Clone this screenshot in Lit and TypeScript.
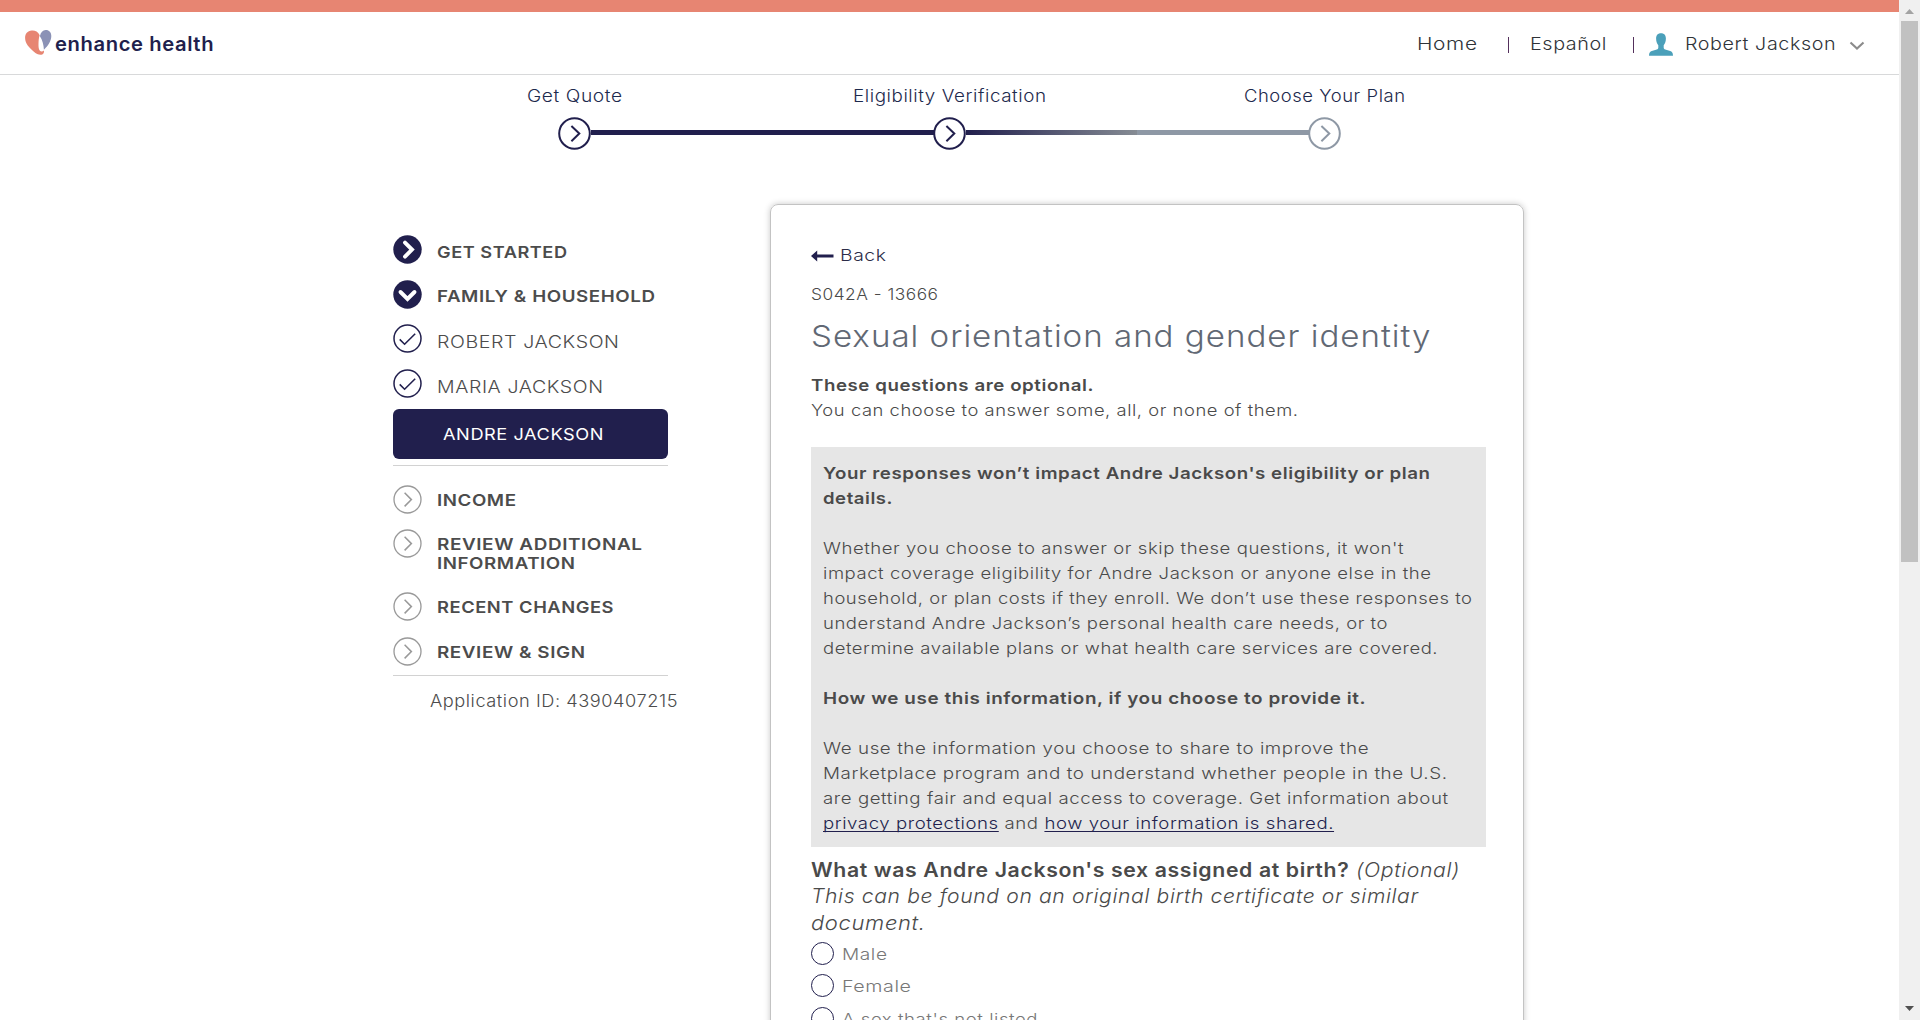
import { LitElement, html, svg, css } from "lit";
import { customElement, property } from "lit/decorators.js";

const TRACKING = 0.03;

/** One line of text in a widened cut: light tracking, then stretched to exactly `w` pixels. */
@customElement("fit-line")
export class FitLine extends LitElement {
  @property({ type: Number }) w = 0;

  static styles = css`
    :host {
      display: block;
      white-space: nowrap;
    }
    .ink {
      display: inline-block;
      transform-origin: 0 50%;
      letter-spacing: 0.03em;
    }
  `;

  updated() {
    const ink = this.renderRoot.querySelector<HTMLElement>(".ink")!;
    this.style.width = `${this.w}px`;
    ink.style.transform = "none";
    const trailing = TRACKING * parseFloat(getComputedStyle(ink).fontSize);
    const natural = ink.getBoundingClientRect().width - trailing;
    ink.style.transform = `scaleX(${(this.w / natural).toFixed(4)})`;
  }

  render() {
    return html`<span class="ink"><slot></slot></span>`;
  }
}

const line = (text: unknown, w: number) => html`<fit-line .w=${w}>${text}</fit-line>`;

const icons = {
  next: svg`<circle cx="14.5" cy="14.5" r="13.5" fill="none" stroke="currentColor" stroke-width="1.3"/><path d="M11.6 7.8 18.4 14.6 11.6 21.4" fill="none" stroke="currentColor" stroke-width="1.5"/>`,
  right: svg`<circle cx="14.5" cy="14.5" r="14.2" fill="currentColor"/><path d="M12 7.6 19 14.6 12 21.6" fill="none" stroke="#fff" stroke-width="3.9" stroke-linecap="round"/>`,
  down: svg`<circle cx="14.5" cy="14.5" r="14.2" fill="currentColor"/><path d="M7.5 12 14.5 19 21.5 12" fill="none" stroke="#fff" stroke-width="3.9" stroke-linecap="round"/>`,
  check: svg`<circle cx="14.5" cy="14.5" r="13.5" fill="none" stroke="currentColor" stroke-width="1.5"/><path d="M6.7 15.4 11.6 20.2 22.2 9.8" fill="none" stroke="currentColor" stroke-width="1.6"/>`,
};

type Item = { icon: keyof typeof icons; lines: [string, number][]; kind: string };

const upper: Item[] = [
  { icon: "right", lines: [["GET STARTED", 130]], kind: "started" },
  { icon: "down", lines: [["FAMILY & HOUSEHOLD", 218]], kind: "family" },
  { icon: "check", lines: [["ROBERT JACKSON", 182]], kind: "member" },
  { icon: "check", lines: [["MARIA JACKSON", 166]], kind: "member last" },
];

const lower: Item[] = [
  { icon: "next", lines: [["INCOME", 79]], kind: "todo" },
  { icon: "next", lines: [["REVIEW ADDITIONAL", 205], ["INFORMATION", 138]], kind: "todo tall" },
  { icon: "next", lines: [["RECENT CHANGES", 176.5]], kind: "todo" },
  { icon: "next", lines: [["REVIEW & SIGN", 148]], kind: "todo" },
];

@customElement("site-header")
export class SiteHeader extends LitElement {
  static styles = css`
    :host {
      display: flex;
      justify-content: space-between;
      box-sizing: border-box;
      height: 75px;
      border-top: 12px solid #e78572;
      border-bottom: 1px solid #d8d9da;
      padding: 0 34px 0 25px;
    }
    .brand {
      display: flex;
      padding-top: 18px;
      color: #211f4d;
    }
    .heart {
      width: 27px;
      height: 26px;
      margin-right: 3px;
    }
    .name {
      font-size: 19.5px;
      font-weight: 600;
      line-height: 27px;
      padding-top: 0.5px;
    }
    .nav {
      display: flex;
      padding-top: 19px;
      font-size: 17.6px;
      line-height: 25px;
      font-weight: 300;
      color: #2f3338;
    }
    .bar {
      width: 1px;
      height: 16px;
      margin-top: 6px;
      background: #54305c;
    }
    .home { margin-right: 31px; }
    .lang { margin: 0 26px 0 21px; }
    .person { width: 24px; height: 23px; margin: 2px 12px 0 15px; }
    .caret { width: 16px; height: 10px; margin: 10px 0 0 14px; }
  `;

  render() {
    return html`
      <div class="brand">
        <svg class="heart" viewBox="0 0 27 26">
          <path fill="#e78572" d="M14.7 5.2C12.8 1.2 9.7.2 6.7.5 2.5.9.1 3.7.1 7.9c0 5.7 4.2 9.7 8.5 13.500 2.700 2.400 5.200 3.600 7.800 3.300 2-.3 3-2 2.500-4.200-1.200 1.300-3 1.500-4 .3-1.200-1.400-1.500-3.700-1.400-6.700.1-3.400.2-6.200 1.200-8.900z"/>
          <path fill="#8b92b6" d="M14.900 6.200C15.700 2.300 17.800.2 20.600.1c3.500-.1 5.700 2.400 5.700 6 0 4.800-2.800 9.500-7.400 13.700C18.700 15 17.500 10 14.900 6.200z"/>
        </svg>
        <div class="name">${line("enhance health", 158.5)}</div>
      </div>
      <div class="nav">
        <div class="home">${line("Home", 60)}</div>
        <div class="bar"></div>
        <div class="lang">${line("Español", 76.5)}</div>
        <div class="bar"></div>
        <svg class="person" viewBox="0 0 24 23">
          <path fill="#4ba0ba" d="M12 .3c3.400 0 4.900 2.200 4.900 5.300 0 3-1 5.400-2.200 6.600v2.500c0 .9.500 1.400 1.500 1.700l5 1.700c1.700.6 2.800 1.900 2.800 4.600H0c0-2.700 1.100-4 2.800-4.600l5-1.700c1-.3 1.500-.8 1.500-1.700v-2.500C8.100 11 7.100 8.600 7.100 5.600 7.100 2.500 8.600.3 12 .3z"/>
        </svg>
        ${line("Robert Jackson", 150.5)}
        <svg class="caret" viewBox="0 0 16 10">
          <path d="M1.500 1.500 8 7.500 14.500 1.500" fill="none" stroke="#8b8b8b" stroke-width="2.100"/>
        </svg>
      </div>
    `;
  }
}

@customElement("progress-steps")
export class ProgressSteps extends LitElement {
  static styles = css`
    :host {
      display: flex;
      flex-direction: column;
      width: 1125px;
      margin-left: 387px;
      font-size: 16.8px;
      font-weight: 300;
      color: #1d2a4d;
    }
    .labels {
      display: grid;
      grid-template-columns: repeat(3, 375px);
      justify-items: center;
      line-height: 24px;
      padding-top: 9px;
    }
    .track {
      display: flex;
      align-items: center;
      padding: 9px 171px 0;
      color: #211f4d;
    }
    .dot { width: 33px; height: 33px; flex: none; }
    .off { color: #8e98a5; }
    .seg { height: 5px; flex: 1; margin: -3px -0.5px 0; background: #211f4d; }
    .half {
      background: linear-gradient(90deg, #211f4d 0, #868c94 50%, #8e98a5 50%);
    }
  `;

  dot(off = false) {
    return html`<svg class="dot ${off ? "off" : ""}" viewBox="0 0 33 33">
      <circle cx="16.5" cy="16.5" r="15.3" fill="#fff" stroke="currentColor" stroke-width="2"/>
      <path d="M13.4 9 21.3 16.5 13.4 24.2" fill="none" stroke="currentColor" stroke-width="2"/>
    </svg>`;
  }

  render() {
    return html`
      <div class="labels">
        ${line("Get Quote", 95)}${line("Eligibility Verification", 193)}${line("Choose Your Plan", 161)}
      </div>
      <div class="track">
        ${this.dot()}<div class="seg"></div>${this.dot()}<div class="seg half"></div>${this.dot(true)}
      </div>
    `;
  }
}

@customElement("side-nav")
export class SideNav extends LitElement {
  static styles = css`
    :host {
      display: block;
      width: 275px;
      font-size: 16.5px;
      line-height: 19px;
      color: #4c4c4c;
    }
    .row {
      display: flex;
      height: 45px;
      font-weight: 600;
    }
    .icon {
      width: 29px;
      height: 29px;
      flex: none;
      margin-right: 15px;
      color: #211f4d;
    }
    .started .text { padding-top: 8.5px; }
    .family { height: 44px; }
    .family .text { padding-top: 7.5px; }
    .member { font-weight: 300; font-size: 17.2px; }
    .member .text { padding-top: 8.5px; }
    .last { height: 40px; }
    .todo { height: 44.5px; }
    .todo .icon { color: #999; }
    .todo .text { padding-top: 6px; }
    .tall { height: 63px; }
    .current {
      height: 50px;
      box-sizing: border-box;
      border-radius: 6px;
      background: #211f4d;
      color: #fff;
      font-weight: 400;
      padding: 16px 0 0 50px;
    }
    .rule { height: 1px; background: #d2d2d2; margin-top: 6px; }
    .group { padding-top: 19px; height: 184px; }
    .app-id {
      padding: 16px 0 0 37px;
      font-weight: 300;
      font-size: 16.8px;
    }
  `;

  row(item: Item) {
    return html`<div class="row ${item.kind}">
      <svg class="icon" viewBox="0 0 29 29">${icons[item.icon]}</svg>
      <div class="text">${item.lines.map(([t, w]) => line(t, w))}</div>
    </div>`;
  }

  render() {
    return html`
      ${upper.map((i) => this.row(i))}
      <div class="current">${line("ANDRE JACKSON", 160.5)}</div>
      <div class="rule"></div>
      <div class="group">${lower.map((i) => this.row(i))}</div>
      <div class="rule"></div>
      <div class="app-id">${line("Application ID: 4390407215", 247.5)}</div>
    `;
  }
}

@customElement("question-card")
export class QuestionCard extends LitElement {
  static styles = css`
    :host {
      display: block;
      box-sizing: border-box;
      width: 754px;
      height: 900px;
      border: 1px solid #c3c3c3;
      border-radius: 8px;
      box-shadow: 0 0 6px rgba(0, 0, 0, 0.22);
      padding: 38px 37px 0 40px;
      font-size: 16.5px;
      line-height: 25px;
      font-weight: 300;
      color: #4a4a4a;
    }
    .back {
      display: flex;
      gap: 5.5px;
      color: #2c2c48;
    }
    .arrow { width: 23px; height: 12px; margin-top: 7px; }
    .code { margin-top: 14px; }
    h1 {
      margin: 7px 0 0;
      font-size: 30px;
      line-height: 44px;
      font-weight: 300;
      color: #616874;
    }
    b { font-weight: 600; }
    .lead { margin-top: 15px; }
    .notice {
      box-sizing: border-box;
      height: 400px;
      margin-top: 24px;
      background: #e6e6e6;
      padding: 14px 12px 0;
    }
    .gap { height: 25px; }
    a {
      color: #211f4d;
      text-decoration: underline;
      text-underline-offset: 2px;
      text-decoration-skip-ink: none;
    }
    .ask {
      margin-top: 9.5px;
      font-size: 19.4px;
      line-height: 26.7px;
    }
    .radio {
      display: flex;
      height: 32.5px;
      gap: 8px;
      color: #777;
    }
    .radios { margin-top: 5px; }
    .ring {
      box-sizing: border-box;
      width: 23px;
      height: 23px;
      border: 1px solid #211f4d;
      border-radius: 50%;
    }
  `;

  render() {
    return html`
      <div class="back">
        <svg class="arrow" viewBox="0 0 23 12"><path fill="#211f4d" d="M0 6 6.2.4v4.1H22.5v3H6.2v4.1z"/></svg>
        ${line("Back", 46)}
      </div>
      <div class="code">${line("S042A - 13666", 127)}</div>
      <h1>${line("Sexual orientation and gender identity", 619.5)}</h1>
      <div class="lead">
        <b>${line("These questions are optional.", 282.5)}</b>
        ${line("You can choose to answer some, all, or none of them.", 487)}
      </div>
      <div class="notice">
        <b>
          ${line("Your responses won’t impact Andre Jackson's eligibility or plan", 607)}
          ${line("details.", 69.5)}
        </b>
        <div class="gap"></div>
        ${line("Whether you choose to answer or skip these questions, it won't", 580.5)}
        ${line("impact coverage eligibility for Andre Jackson or anyone else in the", 608)}
        ${line("household, or plan costs if they enroll. We don’t use these responses to", 649)}
        ${line("understand Andre Jackson’s personal health care needs, or to", 564.5)}
        ${line("determine available plans or what health care services are covered.", 614.5)}
        <div class="gap"></div>
        <b>${line("How we use this information, if you choose to provide it.", 542.5)}</b>
        <div class="gap"></div>
        ${line("We use the information you choose to share to improve the", 545.5)}
        ${line("Marketplace program and to understand whether people in the U.S.", 624)}
        ${line("are getting fair and equal access to coverage. Get information about", 625)}
        ${line(html`<a>privacy protections</a> and <a>how your information is shared.</a>`, 510.5)}
      </div>
      <div class="ask">
        ${line(html`<b>What was Andre Jackson's sex assigned at birth?</b> <i>(Optional)</i>`, 648.5)}
        <i>
          ${line("This can be found on an original birth certificate or similar", 607)}
          ${line("document.", 114)}
        </i>
      </div>
      <div class="radios">
        <div class="radio"><span class="ring"></span>${line("Male", 45)}</div>
        <div class="radio"><span class="ring"></span>${line("Female", 69)}</div>
        <div class="radio"><span class="ring"></span>${line("A sex that's not listed", 195.5)}</div>
      </div>
    `;
  }
}

@customElement("app-root")
export class AppRoot extends LitElement {
  static styles = css`
    :host {
      display: flex;
      width: 1920px;
      height: 1020px;
      overflow: hidden;
      background: #fff;
      font-family: Inter, "Open Sans", "Liberation Sans", sans-serif;
    }
    .page { width: 1899px; height: 1020px; overflow: hidden; }
    .content {
      display: flex;
      padding: 54px 0 0 393px;
      gap: 102px;
    }
    .side { padding-top: 30.5px; }
    .scroll {
      display: flex;
      flex-direction: column;
      align-items: center;
      width: 21px;
      background: #f0f0f0;
    }
    .up, .down { width: 9px; height: 5px; }
    .up { margin: 9px 0 7px; }
    .thumb { width: 17px; height: 541px; background: #c1c1c1; }
    .down { margin-top: 444px; }
  `;

  render() {
    return html`
      <div class="page">
        <site-header></site-header>
        <progress-steps></progress-steps>
        <div class="content">
          <side-nav class="side"></side-nav>
          <question-card></question-card>
        </div>
      </div>
      <div class="scroll">
        <svg class="up" viewBox="0 0 9 5"><path fill="#a3a3a3" d="M0 5 4.5 0 9 5z"/></svg>
        <div class="thumb"></div>
        <svg class="down" viewBox="0 0 9 5"><path fill="#505050" d="M0 0h9L4.5 5z"/></svg>
      </div>
    `;
  }
}
